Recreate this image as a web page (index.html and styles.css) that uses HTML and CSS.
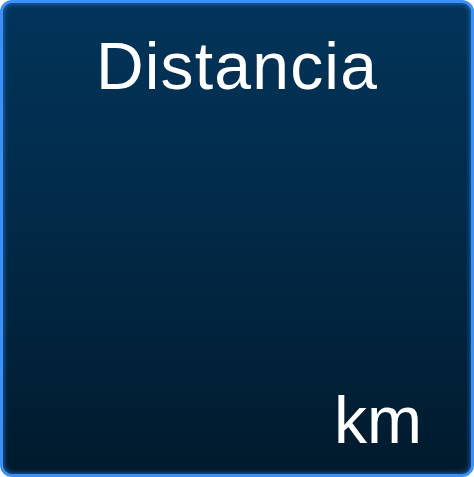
FILE: index.html
```html
<!DOCTYPE html>
<html>
<head>
<meta charset="utf-8">
<link rel="stylesheet" href="styles.css">
</head>
<body>
<div class="tile">
  <div class="title">Distancia</div>
  <div class="unit">km</div>
</div>
</body>
</html>
```
FILE: styles.css
```css
html, body {
  margin: 0;
  padding: 0;
  background: #ffffff;
}
.tile {
  box-sizing: border-box;
  width: 474px;
  height: 477px;
  border: 3px solid #3c90f8;
  border-radius: 12px;
  background: linear-gradient(to bottom, #02345a 0%, #022a48 45%, #011a2d 100%);
  box-shadow: inset 0 0 5px 1px rgba(50, 140, 250, 0.6);
  display: flex;
  flex-direction: column;
  justify-content: space-between;
  font-family: "Liberation Sans", Arial, sans-serif;
  color: #ffffff;
}
.title {
  font-size: 66px;
  line-height: 1;
  letter-spacing: 1.2px;
  text-align: center;
  padding-top: 30px;
}
.unit {
  font-size: 66px;
  line-height: 1;
  align-self: flex-end;
  padding-right: 49px;
  padding-bottom: 21px;
}
```
